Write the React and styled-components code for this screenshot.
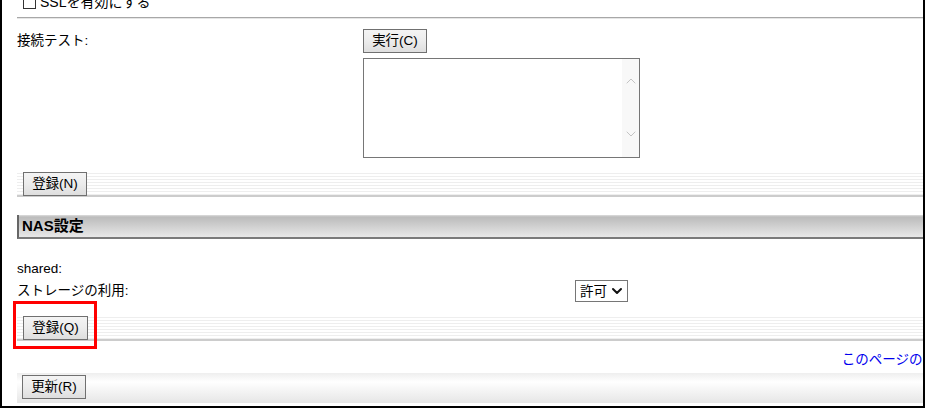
import React from 'react';
import styled, { createGlobalStyle } from 'styled-components';
import { ChevronUp, ChevronDown } from 'lucide-react';

const GlobalStyle = createGlobalStyle`
  html, body {
    margin: 0;
    padding: 0;
    background: #fff;
  }
  body {
    font-family: "Liberation Sans", "Noto Sans CJK JP", sans-serif;
    font-size: 13px;
    color: #000;
  }
`;

const Frame = styled.div`
  width: 925px;
  height: 408px;
  box-sizing: border-box;
  border: 2px solid #000;
  border-top: none;
  overflow: hidden;
  background: #fff;
`;

const Page = styled.div`
  width: 961px;
  box-sizing: border-box;
  padding-left: 15px;
  display: flex;
  flex-direction: column;
`;

const CheckRow = styled.label`
  display: flex;
  align-items: center;
  gap: 4px;
  height: 14px;
  margin-top: -5px;
  padding-left: 6px;
  line-height: 14px;
  font-size: 14px;
`;

const CheckBox = styled.span`
  width: 11px;
  height: 11px;
  border: 1px solid #333;
  background: #fff;
`;

const Separator = styled.div`
  margin-top: 8px;
  height: 1px;
  background: #a8a8a8;
  border-bottom: 1px solid #e6e6e6;
`;

const FieldRow = styled.div`
  display: grid;
  grid-template-columns: 346px 1fr;
  align-items: ${p => (p.$top ? 'start' : 'center')};
  margin-top: ${p => p.$mt || 0}px;
  min-height: ${p => p.$h || 20}px;
`;

const Label = styled.div`
  padding-top: ${p => p.$pt || 0}px;
  line-height: 20px;
  font-size: 13.5px;
`;

const Stack = styled.div`
  display: flex;
  flex-direction: column;
  align-items: flex-start;
  gap: 5px;
`;

const Button = styled.button`
  width: ${p => p.$w || 64}px;
  height: 24px;
  padding: 0;
  box-sizing: border-box;
  border: 1px solid #707070;
  border-radius: 0;
  background: linear-gradient(to bottom, #f4f4f4 0%, #ececec 50%, #dedede 100%);
  font-family: "Liberation Sans", "Noto Sans CJK JP", sans-serif;
  font-size: 13.5px;
  color: #000;
  line-height: 22px;
`;

const OutputBox = styled.div`
  width: 277px;
  height: 100px;
  box-sizing: border-box;
  border: 1px solid #767676;
  display: flex;
  background: #fff;
`;

const OutputText = styled.textarea`
  flex: 1;
  border: none;
  outline: none;
  resize: none;
  padding: 2px;
  font: inherit;
  overflow: hidden;
`;

const ScrollTrack = styled.div`
  width: 17px;
  background: #f8f8f8;
  display: flex;
  flex-direction: column;
  justify-content: space-between;
  align-items: center;
  padding: 14px 0 15px;
  color: #c4c4c4;
`;

const ButtonBar = styled.div`
  margin-top: ${p => p.$mt}px;
  height: 26px;
  padding: 1px 0 0 6px;
  box-sizing: border-box;
  background: repeating-linear-gradient(to bottom, #fff 0 2px, #eeeeee 2px 3px);
  border-bottom: 2px solid #cccccc;
  display: flex;
  align-items: flex-start;
`;

const Highlight = styled.span`
  position: relative;
  display: inline-flex;
  &::after {
    content: '';
    position: absolute;
    left: -10px;
    top: -15px;
    width: 84px;
    height: 48px;
    box-sizing: border-box;
    border: 3px solid #ff0000;
    pointer-events: none;
  }
`;

const SectionHeader = styled.h2`
  margin: 18px 0 0;
  height: 24px;
  box-sizing: border-box;
  border-left: 2px solid #666;
  border-bottom: 2px solid #7a7a7a;
  padding-left: 3px;
  background: linear-gradient(to bottom, #dddddd 0px, #bcbcbc 2px, #c4c4c4 6px, #e8e8e8 100%);
  font-size: 15px;
  font-weight: bold;
  line-height: 22px;
`;

const InfoBlock = styled.div`
  margin-top: 20px;
  display: flex;
  flex-direction: column;
`;

const SelectWrap = styled.div`
  position: relative;
  width: 53px;
  height: 22px;
  margin-left: 212px;
`;

const Select = styled.select`
  appearance: none;
  width: 100%;
  height: 100%;
  box-sizing: border-box;
  border: 1px solid #767676;
  border-radius: 0;
  background: #fff;
  padding: 0 0 0 4px;
  font-family: "Liberation Sans", "Noto Sans CJK JP", sans-serif;
  font-size: 13.5px;
  color: #000;
`;

const SelectArrow = styled(ChevronDown)`
  position: absolute;
  right: 3px;
  top: 3px;
  pointer-events: none;
  color: #111;
`;

const TopLink = styled.a`
  margin-top: 10px;
  align-self: flex-end;
  line-height: 18px;
  font-size: 13.5px;
  color: #0000ee;
  text-decoration: none;
  white-space: nowrap;
`;

const BottomBar = styled.div`
  margin-top: 4px;
  height: 30px;
  padding: 2px 0 0 5px;
  box-sizing: border-box;
  background: linear-gradient(to bottom, #eeeeee 0%, #ffffff 30%, #f4f4f4 60%, #e6e6e6 100%);
`;

export default function App() {
  return (
    <>
      <GlobalStyle />
      <Frame>
        <Page>
          <CheckRow>
            <CheckBox />
            <span>SSLを有効にする</span>
          </CheckRow>
          <Separator />

          <FieldRow $top $mt={10}>
            <Label $pt={2}>接続テスト:</Label>
            <Stack>
              <Button>実行(C)</Button>
              <OutputBox>
                <OutputText readOnly />
                <ScrollTrack>
                  <ChevronUp size={16} strokeWidth={1.5} />
                  <ChevronDown size={16} strokeWidth={1.5} />
                </ScrollTrack>
              </OutputBox>
            </Stack>
          </FieldRow>

          <ButtonBar $mt={13}>
            <Button>登録(N)</Button>
          </ButtonBar>

          <SectionHeader>NAS設定</SectionHeader>

          <InfoBlock>
            <Label>shared:</Label>
            <FieldRow $h={24}>
              <Label>ストレージの利用:</Label>
              <SelectWrap>
                <Select defaultValue="allow">
                  <option value="allow">許可</option>
                  <option value="deny">拒否</option>
                </Select>
                <SelectArrow size={16} strokeWidth={3} />
              </SelectWrap>
            </FieldRow>
          </InfoBlock>

          <ButtonBar $mt={12}>
            <Highlight>
              <Button $w={65}>登録(Q)</Button>
            </Highlight>
          </ButtonBar>

          <TopLink href="#top">このページの先頭へ</TopLink>

          <BottomBar>
            <Button>更新(R)</Button>
          </BottomBar>
        </Page>
      </Frame>
    </>
  );
}
